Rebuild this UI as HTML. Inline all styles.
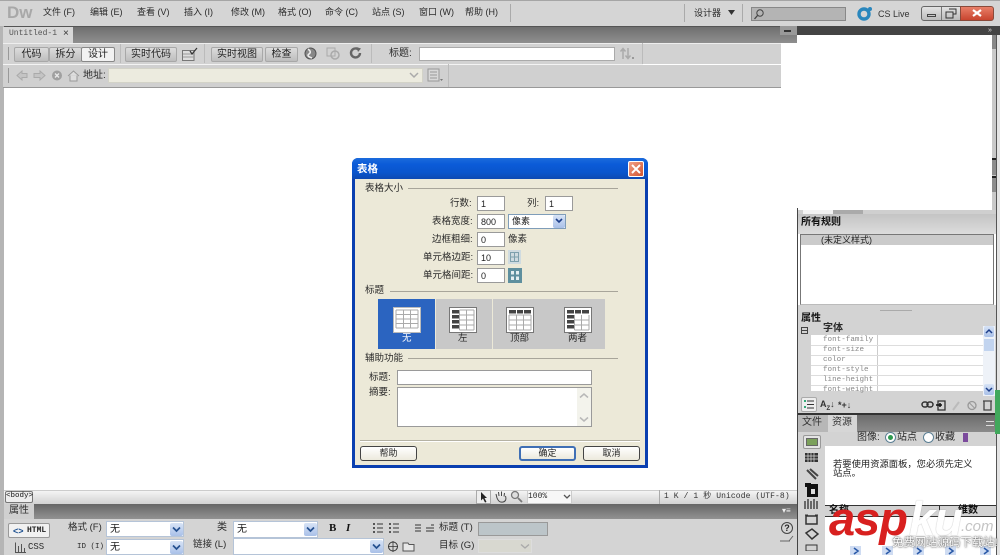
<!DOCTYPE html>
<html><head><meta charset="utf-8">
<style>
html,body{margin:0;padding:0;background:#fff}
#p{position:relative;width:1000px;height:555px;overflow:hidden;background:#fff;font-family:"Liberation Sans","WenQuanYi Zen Hei","Noto Sans CJK SC",sans-serif;font-size:9px;color:#222}
#p div,#p span.t,#p svg{position:absolute}
.t{white-space:nowrap;line-height:12px;font-size:9px;position:absolute;color:#2a2a2a}
.m{font-family:"Liberation Mono","Noto Sans CJK SC",monospace}
.b{background:linear-gradient(#dcdcdc,#bdbdbd);border:1px solid #a8a8a8;border-radius:2px;box-sizing:border-box;text-align:center;font-size:10px;line-height:13px;color:#222}
.i{background:#fff;border:1px solid #9a9a9a;box-sizing:border-box;font-size:9px;line-height:14px;padding-left:3px;color:#222;font-family:"Liberation Sans",sans-serif}
.d{background:#fff;border:1px solid #b5c4d8;box-sizing:border-box;font-size:9px;line-height:13px;padding-left:3px;color:#222}
.ar{background:linear-gradient(#d7e3f6,#a9c0e8);border-radius:2px}
.ln{background:#a8a59a;height:1px}
.db{background:linear-gradient(#fff,#ece9dc);border:1px solid #444;border-radius:3px;box-sizing:border-box;text-align:center;font-size:9px;line-height:13px;color:#222}
.bc{background:#c8c8c8;width:56px;height:50px;top:299px}
.ch{background:#cfdcf2;width:11px;height:9px;top:546px}
</style></head><body><div id="p">

<!-- top menu -->
<div style="left:0;top:0;width:1000px;height:26px;background:#d5d5d5;border-top:1px solid #a5a5a5;box-sizing:border-box"></div>
<span class="t" style="left:7px;top:4px;font-size:17px;line-height:18px;font-weight:bold;color:#a8a8a8">Dw</span>
<span class="t" style="left:43px;top:6px">文件 (F)</span>
<span class="t" style="left:90px;top:6px">编辑 (E)</span>
<span class="t" style="left:137px;top:6px">查看 (V)</span>
<span class="t" style="left:184px;top:6px">插入 (I)</span>
<span class="t" style="left:231px;top:6px">修改 (M)</span>
<span class="t" style="left:278px;top:6px">格式 (O)</span>
<span class="t" style="left:325px;top:6px">命令 (C)</span>
<span class="t" style="left:372px;top:6px">站点 (S)</span>
<span class="t" style="left:419px;top:6px">窗口 (W)</span>
<span class="t" style="left:465px;top:6px">帮助 (H)</span>
<div style="left:510px;top:4px;width:1px;height:18px;background:#aaa"></div>
<div style="left:684px;top:4px;width:1px;height:18px;background:#aaa"></div>
<div style="left:742px;top:4px;width:1px;height:18px;background:#aaa"></div>
<span class="t" style="left:694px;top:7px">设计器</span>
<svg style="left:728px;top:10px" width="7" height="5"><path d="M0 0H7L3.5 5Z" fill="#333"/></svg>
<div style="left:751px;top:7px;width:95px;height:14px;background:#b4b4b4;border:1px solid #888;box-sizing:border-box"></div>
<svg style="left:753px;top:8px" width="12" height="12"><circle cx="7" cy="5" r="3.2" fill="none" stroke="#444"/><path d="M4.5 7.5L1.5 11" stroke="#444" stroke-width="1.3"/></svg>
<svg style="left:856px;top:6px" width="18" height="16"><circle cx="8" cy="8" r="5" fill="none" stroke="#2a87bd" stroke-width="3.4"/><circle cx="14" cy="3" r="2" fill="#2a87bd"/></svg>
<span class="t" style="left:878px;top:8px;color:#333">CS Live</span>
<div style="left:921px;top:6px;width:40px;height:15px;background:linear-gradient(#e2e2e2,#bbb);border:1px solid #666;border-radius:3px 0 0 3px;box-sizing:border-box"></div>
<div style="left:960px;top:6px;width:34px;height:15px;background:linear-gradient(#e87f68,#c8452f);border:1px solid #8a4a3a;border-radius:0 3px 3px 0;box-sizing:border-box"></div>
<div style="left:941px;top:7px;width:1px;height:13px;background:#777"></div>
<div style="left:927px;top:14px;width:9px;height:3px;border:1px solid #444;box-sizing:border-box"></div>
<svg style="left:945px;top:8px" width="12" height="11"><path d="M4 1H11V6H8M1 4H8V10H1Z" fill="none" stroke="#333"/></svg>
<svg style="left:972px;top:9px" width="10" height="8"><path d="M1 1L9 7M9 1L1 7" stroke="#fff" stroke-width="2.2"/></svg>

<!-- tab row -->
<div style="left:0;top:26px;width:797px;height:17px;background:linear-gradient(#6f6f6f,#8f8f8f);border-top:1px solid #555;box-sizing:border-box"></div>
<div style="left:0;top:26px;width:4px;height:529px;background:#b5b5b5"></div>
<div style="left:3px;top:27px;width:70px;height:16px;background:#d7d7d7"></div>
<span class="t m" style="left:9px;top:28px;font-size:8px;color:#555">Untitled-1</span>
<span class="t" style="left:63px;top:28px;font-size:10px;color:#333">×</span>
<div style="left:780px;top:26px;width:17px;height:9px;background:#999"></div>
<div style="left:784px;top:30px;width:7px;height:2px;background:#333"></div>
<div style="left:797px;top:26px;width:203px;height:9px;background:#444"></div>
<span class="t" style="left:988px;top:25px;font-size:7px;color:#ddd">»</span>

<!-- toolbar 1 -->
<div style="left:3px;top:43px;width:778px;height:21px;background:#d2d2d2;border-top:1px solid #eee;box-sizing:border-box"></div>
<div style="left:8px;top:47px;width:1px;height:13px;background:#999"></div>
<div class="b" style="left:14px;top:47px;width:35px;height:15px">代码</div>
<div class="b" style="left:49px;top:47px;width:33px;height:15px">拆分</div>
<div class="b" style="left:81px;top:47px;width:34px;height:15px;background:#f2f2f2;border-color:#888">设计</div>
<div style="left:120px;top:44px;width:1px;height:19px;background:#bbb"></div>
<div class="b" style="left:125px;top:47px;width:52px;height:15px">实时代码</div>
<svg style="left:181px;top:47px" width="18" height="15"><path d="M1.5 3.5H13V13.5H1.5Z" fill="#ddd" stroke="#777"/><path d="M2 7H13M2 10H13" stroke="#999"/><path d="M9 4L11 7L16 1" fill="none" stroke="#333" stroke-width="1.2"/></svg>
<div style="left:204px;top:44px;width:1px;height:19px;background:#bbb"></div>
<div class="b" style="left:211px;top:47px;width:52px;height:15px">实时视图</div>
<div class="b" style="left:265px;top:47px;width:33px;height:15px">检查</div>
<svg style="left:303px;top:46px" width="17" height="15"><circle cx="7.5" cy="7.5" r="5.5" fill="#888" stroke="#555"/><path d="M5 3Q9 6 6 8T9 12" stroke="#eee" fill="none" stroke-width="1.5"/></svg>
<svg style="left:325px;top:46px" width="19" height="15"><rect x="2" y="2" width="8" height="8" fill="none" stroke="#aaa"/><circle cx="10" cy="9" r="4" fill="none" stroke="#aaa" stroke-width="1.5"/></svg>
<svg style="left:349px;top:46px" width="14" height="14"><path d="M11 7A4.5 4.5 0 1 1 9 3.2" fill="none" stroke="#666" stroke-width="2.4"/><path d="M7.5 1L12 2.5L9 6Z" fill="#666"/></svg>
<div style="left:371px;top:44px;width:1px;height:19px;background:#bbb"></div>
<span class="t" style="left:389px;top:48px;font-size:10px">标题:</span>
<div style="left:419px;top:47px;width:196px;height:14px;background:#fff;border:1px solid #aaa;box-sizing:border-box"></div>
<svg style="left:619px;top:46px" width="18" height="15"><path d="M4 13V3M1.5 5.5L4 2.5L6.5 5.5M9 2V12M6.5 9.5L9 12.5L11.500 9.500" fill="none" stroke="#aaa" stroke-width="1.5"/><rect x="13" y="11" width="2" height="2" fill="#999"/></svg>
<div style="left:642px;top:43px;width:1px;height:21px;background:#bbb"></div>

<!-- toolbar 2 -->
<div style="left:3px;top:65px;width:778px;height:23px;background:#d0d0d0;border-bottom:1px solid #999;box-sizing:border-box"></div>
<div style="left:3px;top:64px;width:640px;height:1px;background:#f3f3f3"></div>
<div style="left:8px;top:68px;width:1px;height:15px;background:#999"></div>
<svg style="left:16px;top:69px" width="30" height="13"><path d="M1 6.5L6 2V4.5H11V8.5H6V11Z" fill="#c4c4c4" stroke="#aaa"/><path d="M29 6.5L24 2V4.5H18V8.5H24V11Z" fill="#c4c4c4" stroke="#aaa"/></svg>
<svg style="left:51px;top:69px" width="12" height="13"><circle cx="6" cy="6.5" r="5" fill="#a0a0a0"/><path d="M4 4.5L8 8.5M8 4.5L4 8.5" stroke="#e8e8e8" stroke-width="1.3"/></svg>
<svg style="left:67px;top:69px" width="13" height="13"><path d="M1 7L6.5 2L12 7M3 6.5V12H10V6.5" fill="#ddd" stroke="#999"/></svg>
<span class="t" style="left:83px;top:70px;font-size:10px">地址:</span>
<div style="left:108px;top:68px;width:315px;height:15px;background:#ecebdf;border:1px solid #d3d3c8;box-sizing:border-box"></div>
<svg style="left:408px;top:71px" width="12" height="9"><path d="M2 2L6 6L10 2" fill="none" stroke="#aaa" stroke-width="1.5"/></svg>
<svg style="left:427px;top:68px" width="17" height="15"><rect x="1" y="1" width="11" height="12" fill="#d8d8d8" stroke="#999"/><path d="M3 4H10M3 7H10M3 10H10" stroke="#999"/><path d="M13 11H16L14.5 13Z" fill="#777"/></svg>
<div style="left:448px;top:64px;width:1px;height:23px;background:#bbb"></div>

<!-- right column -->
<div style="left:992px;top:35px;width:4px;height:175px;background:#c9c9c9"></div>
<div style="left:992px;top:35px;width:4px;height:14px;background:#888"></div>
<div style="left:992px;top:158px;width:4px;height:17px;background:#8d8d8d;border-top:2px solid #222;box-sizing:border-box"></div>
<div style="left:992px;top:176px;width:4px;height:16px;background:#8d8d8d;border-top:2px solid #222;box-sizing:border-box"></div>
<div style="left:997px;top:35px;width:3px;height:520px;background:#e4e4e4"></div>
<div style="left:996px;top:35px;width:1px;height:520px;background:#555"></div>
<div style="left:797px;top:208px;width:1px;height:347px;background:#444"></div>
<div style="left:798px;top:210px;width:198px;height:8px;background:#cfcfcf"></div>
<div style="left:803px;top:210px;width:30px;height:4px;background:#f2f2f2"></div>
<div style="left:833px;top:210px;width:30px;height:4px;background:#aaa"></div>

<!-- CSS panel -->
<div style="left:798px;top:214px;width:198px;height:20px;background:linear-gradient(#c4c4c4,#dcdcdc)"></div>
<span class="t" style="left:801px;top:217px;font-size:10px;font-weight:bold;color:#111">所有规则</span>
<div style="left:800px;top:234px;width:194px;height:71px;background:#fff;border:1px solid #777;border-bottom-color:#bbb;box-sizing:border-box"></div>
<div style="left:801px;top:235px;width:192px;height:10px;background:#cbcbcb"></div>
<span class="t" style="left:821px;top:234px;color:#222">(未定义样式)</span>
<div style="left:798px;top:305px;width:198px;height:108px;background:#d3d3d3"></div>
<div style="left:880px;top:310px;width:32px;height:1px;background:#aaa"></div>
<span class="t" style="left:801px;top:313px;font-size:10px;font-weight:bold;color:#111">属性</span>
<div style="left:801px;top:327px;width:7px;height:7px;border:1px solid #444;box-sizing:border-box"></div>
<div style="left:802px;top:330px;width:5px;height:1px;background:#444"></div>
<span class="t" style="left:823px;top:323px;font-size:10px;font-weight:bold">字体</span>
<div style="left:811px;top:335px;width:176px;height:56px;background:#fff"></div>
<div style="left:877px;top:335px;width:1px;height:56px;background:#ccc"></div>
<div style="left:811px;top:345px;width:176px;height:1px;background:#ddd"></div>
<div style="left:811px;top:355px;width:176px;height:1px;background:#ddd"></div>
<div style="left:811px;top:365px;width:176px;height:1px;background:#ddd"></div>
<div style="left:811px;top:375px;width:176px;height:1px;background:#ddd"></div>
<div style="left:811px;top:385px;width:176px;height:1px;background:#ddd"></div>
<span class="t m" style="left:823px;top:335px;font-size:7.6px;line-height:10px;color:#888">font-family</span>
<span class="t m" style="left:823px;top:345px;font-size:7.6px;line-height:10px;color:#888">font-size</span>
<span class="t m" style="left:823px;top:355px;font-size:7.6px;line-height:10px;color:#888">color</span>
<span class="t m" style="left:823px;top:365px;font-size:7.6px;line-height:10px;color:#888">font-style</span>
<span class="t m" style="left:823px;top:375px;font-size:7.6px;line-height:10px;color:#888">line-height</span>
<span class="t m" style="left:823px;top:385px;font-size:7.6px;line-height:10px;color:#888">font-weight</span>
<div style="left:983px;top:326px;width:12px;height:70px;background:#eef2f8"></div>
<div class="ar" style="left:984px;top:326px;width:10px;height:11px"></div>
<div style="left:984px;top:339px;width:10px;height:12px;background:#c2d4ef"></div>
<div class="ar" style="left:984px;top:384px;width:10px;height:11px"></div>
<svg style="left:985px;top:328px" width="8" height="6"><path d="M1 5L4 2L7 5" fill="none" stroke="#1d3f8a" stroke-width="1.5"/></svg>
<svg style="left:985px;top:387px" width="8" height="6"><path d="M1 1L4 4L7 1" fill="none" stroke="#1d3f8a" stroke-width="1.5"/></svg>
<div style="left:801px;top:397px;width:16px;height:15px;background:#eee;border:1px solid #aaa;border-radius:2px;box-sizing:border-box"></div>
<svg style="left:804px;top:400px" width="11" height="9"><path d="M3 1H10M3 4.5H10M3 8H10" stroke="#333"/><rect x="0" y="0" width="2" height="2" fill="#3a7"/><rect x="0" y="6" width="2" height="2" fill="#3a7"/></svg>
<span class="t" style="left:820px;top:398px;font-size:9px;font-weight:bold;color:#333">A<sub style="font-size:6px">Z</sub>↓</span>
<span class="t" style="left:838px;top:399px;font-size:9px;font-weight:bold;color:#333">*+↓</span>
<svg style="left:921px;top:398px" width="72" height="14"><rect x="1" y="4" width="6" height="5" rx="2.5" fill="none" stroke="#333" stroke-width="1.5"/><rect x="6" y="4" width="6" height="5" rx="2.5" fill="none" stroke="#333" stroke-width="1.5"/><path d="M17 3H24V12H17Z" fill="none" stroke="#333" stroke-width="1.3"/><path d="M15 7H21M19 5V9" stroke="#111" stroke-width="1.5"/><path d="M32 12L38 4" stroke="#bbb" stroke-width="2"/><circle cx="51" cy="7.5" r="4" fill="none" stroke="#999" stroke-width="1.3"/><path d="M48.5 5L53.5 10" stroke="#999"/><path d="M62 3H71M63 3V12H70V3" fill="none" stroke="#444" stroke-width="1.3"/></svg>

<!-- files panel -->
<div style="left:798px;top:413px;width:198px;height:2px;background:#333"></div>
<div style="left:798px;top:415px;width:198px;height:17px;background:linear-gradient(#6c6c6c,#8b8b8b)"></div>
<div style="left:798px;top:415px;width:30px;height:17px;background:#b7b7b7"></div>
<div style="left:828px;top:415px;width:29px;height:17px;background:#d6d6d6"></div>
<span class="t" style="left:802px;top:417px;font-size:10px;color:#333">文件</span>
<span class="t" style="left:832px;top:417px;font-size:10px;color:#333">资源</span>
<div style="left:986px;top:421px;width:8px;height:5px;border-top:1px solid #ddd;border-bottom:1px solid #ddd;box-sizing:border-box"></div>
<div style="left:798px;top:432px;width:198px;height:123px;background:#d3d3d3"></div>
<div style="left:995px;top:390px;width:5px;height:44px;background:#41a85c"></div>
<div style="left:803px;top:435px;width:18px;height:14px;background:#e4e4e4;border:1px solid #999;border-radius:2px;box-sizing:border-box"></div>
<div style="left:806px;top:438px;width:12px;height:8px;background:#7ba05b;border:1px solid #666;box-sizing:border-box"></div>
<svg style="left:804px;top:451px" width="16" height="100"><rect x="1" y="2" width="13" height="9" fill="#333"/><path d="M1 5H14M1 8H14M4 2V11M7 2V11M10 2V11" stroke="#ddd" stroke-width=".7"/><path d="M3 19L12 28M6 18L14 25" stroke="#444" stroke-width="2"/><rect x="3" y="33" width="11" height="13" fill="#111"/><rect x="1" y="32" width="6" height="4" fill="#111"/><rect x="7" y="38" width="4" height="5" fill="#ddd"/><path d="M1 50V58M4 48V58M7 50V58M10 48V58M13 50V58" stroke="#444" stroke-width="1.5"/><rect x="2" y="65" width="11" height="8" fill="none" stroke="#333" stroke-width="1.5"/><path d="M1 64H4M11 64H14" stroke="#333"/><path d="M2 82L8 78L14 83L8 88Z" fill="none" stroke="#333" stroke-width="1.5"/><rect x="2" y="94" width="11" height="6" fill="none" stroke="#333"/></svg>
<span class="t" style="left:857px;top:432px;font-size:10px">图像:</span>
<div style="left:885px;top:432px;width:11px;height:11px;border-radius:50%;background:#fff;border:1px solid #5b7f94;box-sizing:border-box"></div>
<div style="left:888px;top:435px;width:5px;height:5px;border-radius:50%;background:#2f9a4f"></div>
<span class="t" style="left:897px;top:432px;font-size:10px">站点</span>
<div style="left:923px;top:432px;width:11px;height:11px;border-radius:50%;background:#fff;border:1px solid #5b7f94;box-sizing:border-box"></div>
<span class="t" style="left:935px;top:432px;font-size:10px">收藏</span>
<div style="left:963px;top:433px;width:5px;height:9px;background:#7b4a9c"></div>
<div style="left:825px;top:446px;width:171px;height:51px;background:#fff"></div>
<span class="t" style="left:833px;top:458px;font-size:9.3px;line-height:12px;color:#222">若要使用资源面板，您必须先定义</span>
<span class="t" style="left:833px;top:467px;font-size:9.3px;line-height:12px;color:#222">站点。</span>
<div style="left:825px;top:497px;width:171px;height:58px;background:#fff"></div>
<div style="left:825px;top:505px;width:171px;height:12px;background:#d2d2d2;border-top:1px solid #333;border-bottom:1px solid #333;box-sizing:border-box"></div>
<div style="left:939px;top:505px;width:1px;height:12px;background:#333"></div>
<span class="t" style="left:829px;top:505px;font-size:10px;font-weight:bold;color:#111">名称</span>
<span class="t" style="left:958px;top:505px;font-size:10px;font-weight:bold;color:#111">维数</span>
<div class="ch" style="left:850px"></div>
<div class="ch" style="left:882px"></div>
<div class="ch" style="left:913px"></div>
<div class="ch" style="left:945px"></div>
<div class="ch" style="left:980px"></div>
<svg style="left:852px;top:547px" width="140" height="8"><path d="M2 1L6 4L2 7M34 1L38 4L34 7M65 1L69 4L65 7M97 1L101 4L97 7M132 1L136 4L132 7" fill="none" stroke="#2b5aa8" stroke-width="1.6"/></svg>

<!-- doc bottom / status -->
<div style="left:4px;top:490px;width:793px;height:14px;background:linear-gradient(#f4f4f4,#d2d2d2);border-top:1px solid #ccc;box-sizing:border-box"></div>
<div style="left:5px;top:491px;width:28px;height:12px;border:1px solid #777;border-radius:2px;background:#eee;box-sizing:border-box"></div>
<span class="t m" style="left:6px;top:491px;font-size:7.5px;line-height:11px;color:#111">&lt;body&gt;</span>
<div style="left:476px;top:490px;width:15px;height:14px;background:#eee;border:1px solid #aaa;box-sizing:border-box"></div>
<svg style="left:480px;top:491px" width="9" height="12"><path d="M1 1L7 7H4.5L6.5 11L5 11.5L3 7.5L1 9.5Z" fill="#222"/></svg>
<svg style="left:494px;top:490px" width="14" height="13"><path d="M3 8L2 4M5 6L4.5 2M7.5 6V1.5M10 6.5L10.5 3M3 8Q5 13 9 12T11.5 6" fill="none" stroke="#444"/></svg>
<svg style="left:510px;top:490px" width="13" height="13"><circle cx="5" cy="5" r="3.5" fill="#ddd" stroke="#777" stroke-width="1.3"/><path d="M8 8L12 12" stroke="#777" stroke-width="1.8"/></svg>
<div style="left:527px;top:490px;width:45px;height:14px;background:#f7f7f7;border:1px solid #ccc;box-sizing:border-box"></div>
<span class="t m" style="left:528px;top:491px;font-size:8px;line-height:11px">100%</span>
<svg style="left:563px;top:494px" width="8" height="6"><path d="M1 1L4 4L7 1" fill="none" stroke="#555" stroke-width="1.3"/></svg>
<div style="left:659px;top:490px;width:1px;height:14px;background:#aaa"></div>
<span class="t m" style="left:664px;top:491px;font-size:8px;line-height:11px;letter-spacing:.1px;color:#333">1 K / 1 秒 Unicode (UTF-8)</span>

<!-- properties panel -->
<div style="left:4px;top:504px;width:793px;height:15px;background:linear-gradient(#666,#929292)"></div>
<div style="left:4px;top:504px;width:30px;height:15px;background:#cfcfcf"></div>
<span class="t" style="left:9px;top:505px;font-size:10px;color:#333">属性</span>
<span class="t" style="left:782px;top:505px;font-size:8px;color:#eee">▾≡</span>
<div style="left:4px;top:519px;width:793px;height:36px;background:#d4d4d4"></div>
<div style="left:8px;top:523px;width:42px;height:15px;background:#f1f1f1;border:1px solid #999;border-radius:2px;box-sizing:border-box"></div>
<span class="t" style="left:13px;top:525px;font-size:9px;font-weight:bold;color:#1c4f8f">&lt;&gt;</span>
<span class="t m" style="left:27px;top:525px;font-size:8px;font-weight:bold;color:#222">HTML</span>
<svg style="left:14px;top:541px" width="13" height="13"><path d="M1.5 1.5V11.5H12M4.5 5V11M7.5 3V11M10.5 7V11" fill="none" stroke="#555"/></svg>
<span class="t m" style="left:28px;top:541px;font-size:9px">CSS</span>
<span class="t" style="left:68px;top:522px;font-size:9.5px">格式 (F)</span>
<span class="t m" style="left:77px;top:541px;font-size:7.5px">ID (I)</span>
<div class="d" style="left:106px;top:521px;width:78px;height:16px;line-height:15px;font-size:10px">无</div>
<div class="d" style="left:106px;top:539px;width:78px;height:16px;line-height:15px;font-size:10px">无</div>
<div class="ar" style="left:170px;top:523px;width:13px;height:13px"></div>
<div class="ar" style="left:170px;top:541px;width:13px;height:13px"></div>
<span class="t" style="left:217px;top:522px;font-size:10px">类</span>
<span class="t" style="left:193px;top:539px;font-size:9.5px">链接 (L)</span>
<div class="d" style="left:233px;top:521px;width:85px;height:17px;line-height:15px;font-size:10px">无</div>
<div class="ar" style="left:304px;top:523px;width:13px;height:13px"></div>
<div class="d" style="left:233px;top:538px;width:151px;height:17px"></div>
<div class="ar" style="left:370px;top:540px;width:13px;height:13px"></div>
<svg style="left:172px;top:526px" width="9" height="7"><path d="M1 1.5L4.5 5L8 1.5" fill="none" stroke="#24508f" stroke-width="1.7"/></svg>
<svg style="left:172px;top:544px" width="9" height="7"><path d="M1 1.5L4.5 5L8 1.5" fill="none" stroke="#24508f" stroke-width="1.7"/></svg>
<svg style="left:306px;top:526px" width="9" height="7"><path d="M1 1.5L4.5 5L8 1.5" fill="none" stroke="#24508f" stroke-width="1.7"/></svg>
<svg style="left:372px;top:543px" width="9" height="7"><path d="M1 1.5L4.5 5L8 1.5" fill="none" stroke="#24508f" stroke-width="1.7"/></svg>
<span class="t" style="left:329px;top:522px;font-family:'Liberation Serif',serif;font-size:11px;font-weight:bold;color:#111">B</span>
<span class="t" style="left:346px;top:522px;font-family:'Liberation Serif',serif;font-size:11px;font-weight:bold;font-style:italic;color:#111">I</span>
<svg style="left:372px;top:522px" width="62" height="13"><path d="M5 2H11M5 6H11M5 10H11M21 2H27M21 6H27M21 10H27M43 3H49M43 6H49M43 9H49M59 3H62M54 6H62M54 9H62" stroke="#333"/><path d="M1 1H3V3H1ZM1 5H3V7H1ZM1 9H3V11H1ZM17 1H19V3H17ZM17 5H19V7H17ZM17 9H19V11H17Z" fill="#555"/></svg>
<span class="t" style="left:439px;top:522px;font-size:9.5px">标题 (T)</span>
<span class="t" style="left:439px;top:540px;font-size:9.5px">目标 (G)</span>
<div style="left:478px;top:522px;width:70px;height:14px;background:#bcc5c9;border:1px solid #999;box-sizing:border-box"></div>
<div style="left:478px;top:539px;width:54px;height:14px;background:#d8d8d0;border:1px solid #ddd;box-sizing:border-box"></div>
<svg style="left:520px;top:543px" width="10" height="7"><path d="M1 1.5L5 5L9 1.5" fill="none" stroke="#aaa" stroke-width="1.4"/></svg>
<svg style="left:387px;top:540px" width="28" height="13"><circle cx="6" cy="6.5" r="4.5" fill="none" stroke="#333"/><path d="M6 1V12M1 6.5H11" stroke="#333" stroke-width=".8"/><path d="M16 3H21L22 4.5H27V11H16Z" fill="#e8e8e8" stroke="#555"/></svg>
<div style="left:781px;top:522px;width:12px;height:12px;border:1px solid #444;border-radius:50%;box-sizing:border-box;text-align:center;font-size:9px;line-height:10px;font-weight:bold">?</div>
<svg style="left:779px;top:535px" width="16" height="8"><path d="M1 6H11M10 6L14 1" stroke="#666"/></svg>

<!-- DIALOG -->
<div style="left:352px;top:158px;width:296px;height:310px;background:#0a3fb0;border-radius:6px 6px 0 0"></div>
<div style="left:352px;top:158px;width:296px;height:21px;background:linear-gradient(#1b6bdc,#0b5bd8 30%,#0a55cc 70%,#0d49b2);border-radius:6px 6px 0 0"></div>
<span class="t" style="left:357px;top:163px;font-size:10.5px;font-weight:bold;color:#fff">表格</span>
<div style="left:628px;top:161px;width:16px;height:16px;background:linear-gradient(135deg,#f0a088,#d3542d);border:1px solid #fff;border-radius:2px;box-sizing:border-box"></div>
<svg style="left:631px;top:164px" width="10" height="10"><path d="M1 1L9 9M9 1L1 9" stroke="#fff" stroke-width="2"/></svg>
<div style="left:355px;top:179px;width:290px;height:286px;background:#ece9d8"></div>

<span class="t" style="left:365px;top:182px;font-size:9.5px;top:183px">表格大小</span>
<div class="ln" style="left:408px;top:188px;width:210px"></div>
<span class="t" style="left:450px;top:198px;font-size:9.5px">行数:</span>
<div class="i" style="left:477px;top:196px;width:28px;height:15px">1</div>
<span class="t" style="left:527px;top:198px;font-size:9.5px">列:</span>
<div class="i" style="left:545px;top:196px;width:28px;height:15px">1</div>
<span class="t" style="left:432px;top:216px;font-size:9.5px">表格宽度:</span>
<div class="i" style="left:477px;top:214px;width:28px;height:15px">800</div>
<div class="d" style="left:508px;top:214px;width:58px;height:15px;border-color:#7f9db9">像素</div>
<div class="ar" style="left:553px;top:215px;width:12px;height:13px"></div>
<svg style="left:555px;top:218px" width="8" height="6"><path d="M1 1L4 4L7 1" fill="none" stroke="#1d3f8a" stroke-width="1.6"/></svg>
<span class="t" style="left:432px;top:234px;font-size:9.5px">边框粗细:</span>
<div class="i" style="left:477px;top:232px;width:28px;height:15px">0</div>
<span class="t" style="left:508px;top:234px;font-size:9.5px">像素</span>
<span class="t" style="left:423px;top:252px;font-size:9.5px">单元格边距:</span>
<div class="i" style="left:477px;top:250px;width:28px;height:15px">10</div>
<svg style="left:508px;top:250px" width="13" height="14"><rect width="13" height="14" fill="#cfdbe0"/><path d="M2.5 2.5H10.5V11.5H2.5ZM2.5 7H10.5M6.5 2.5V11.5" fill="none" stroke="#7ea0ad"/></svg>
<span class="t" style="left:423px;top:270px;font-size:9.5px">单元格间距:</span>
<div class="i" style="left:477px;top:268px;width:28px;height:15px">0</div>
<svg style="left:508px;top:268px" width="14" height="15"><rect width="14" height="15" fill="#5e8f9e"/><path d="M3 3H6V6.5H3ZM8 3H11V6.5H8ZM3 8.5H6V12H3ZM8 8.5H11V12H8Z" fill="#e4eef0"/></svg>
<span class="t" style="left:365px;top:285px;font-size:9.5px">标题</span>
<div class="ln" style="left:390px;top:291px;width:228px"></div>

<div style="left:378px;top:299px;width:57px;height:50px;background:#2b64c0"></div>
<div class="bc" style="left:436px"></div>
<div class="bc" style="left:493px"></div>
<div class="bc" style="left:549px"></div>

<svg style="left:393px;top:307px" width="28" height="26"><rect x=".5" y=".5" width="27" height="25" fill="#fff" stroke="#bbb"/><path d="M3 3H25M3 7.5H25M3 12H25M3 16.5H25M3 21H25M3 3V21M10.5 3V21M17.5 3V21M25 3V21" fill="none" stroke="#aaa"/></svg>
<svg style="left:449px;top:307px" width="28" height="26"><rect x=".5" y=".5" width="27" height="25" fill="#fff" stroke="#777"/><path d="M10.5 3V23M17.5 3V23M25 3V23M10.5 3H25M10.5 8H25M10.5 13H25M10.5 18H25M10.5 23H25" fill="none" stroke="#aaa"/><path d="M3 3H10V6.5H3ZM3 8H10V11.5H3ZM3 13H10V16.5H3ZM3 18H10V21.5H3Z" fill="#444"/></svg>
<svg style="left:506px;top:307px" width="28" height="26"><rect x=".5" y=".5" width="27" height="25" fill="#fff" stroke="#777"/><path d="M3 8H25M3 13H25M3 18H25M3 23H25M3 8V23M10.5 8V23M17.5 8V23M25 8V23" fill="none" stroke="#aaa"/><path d="M3 3H10V6.5H3ZM11 3H17V6.5H11ZM18 3H25V6.5H18Z" fill="#444"/></svg>
<svg style="left:564px;top:307px" width="28" height="26"><rect x=".5" y=".5" width="27" height="25" fill="#fff" stroke="#777"/><path d="M10.5 8V23M17.5 8V23M25 8V23M10.5 13H25M10.5 18H25M10.5 23H25" fill="none" stroke="#aaa"/><path d="M3 3H10V6.5H3ZM11 3H17V6.5H11ZM18 3H25V6.5H18ZM3 8H10V11.5H3ZM3 13H10V16.5H3ZM3 18H10V21.5H3Z" fill="#444"/></svg>
<span class="t" style="left:402px;top:333px;font-size:9.5px;color:#fff">无</span>
<span class="t" style="left:458px;top:333px;font-size:9.5px">左</span>
<span class="t" style="left:510px;top:333px;font-size:9.5px">顶部</span>
<span class="t" style="left:568px;top:333px;font-size:9.5px">两者</span>

<span class="t" style="left:365px;top:353px;font-size:9.5px">辅助功能</span>
<div class="ln" style="left:408px;top:358px;width:210px"></div>
<span class="t" style="left:369px;top:372px;font-size:9.5px">标题:</span>
<div class="i" style="left:397px;top:370px;width:195px;height:15px"></div>
<span class="t" style="left:369px;top:387px;font-size:9.5px">摘要:</span>
<div class="i" style="left:397px;top:387px;width:195px;height:40px"></div>
<div style="left:577px;top:388px;width:14px;height:38px;background:#f3f3ec"></div>
<svg style="left:579px;top:392px" width="10" height="7"><path d="M1 5.5L5 2L9 5.5" fill="none" stroke="#b8b8b8" stroke-width="1.5"/></svg>
<svg style="left:579px;top:416px" width="10" height="7"><path d="M1 1.5L5 5L9 1.5" fill="none" stroke="#b8b8b8" stroke-width="1.5"/></svg>
<div style="left:360px;top:440px;width:280px;height:1px;background:#b5b2a4"></div>
<div style="left:360px;top:441px;width:280px;height:1px;background:#fff"></div>
<div class="db" style="left:360px;top:446px;width:57px;height:15px">帮助</div>
<div class="db" style="left:519px;top:446px;width:57px;height:15px;border:2px solid #3f6fb5;line-height:11px">确定</div>
<div class="db" style="left:583px;top:446px;width:57px;height:15px">取消</div>

<!-- watermark -->
<span class="t" style="left:829px;top:494px;font-family:'Liberation Sans',sans-serif;font-size:47px;line-height:50px;font-weight:bold;font-style:italic;color:#d8201f;letter-spacing:-1px">asp</span>
<span class="t" style="left:909px;top:494px;font-family:'Liberation Sans',sans-serif;font-size:47px;line-height:50px;font-weight:bold;font-style:italic;color:#fff;letter-spacing:-1px;text-shadow:0 0 1px #999">ku</span>
<span class="t" style="left:961px;top:519px;font-family:'Liberation Sans',sans-serif;font-size:15px;line-height:16px;color:#c4c4c4;font-style:italic">.com</span>
<span class="t" style="left:892px;top:536px;font-size:11.4px;line-height:14px;color:#fff;text-shadow:0 0 2px #555,0 0 1px #555">免费网站源码下载站!</span>

</div></body></html>
